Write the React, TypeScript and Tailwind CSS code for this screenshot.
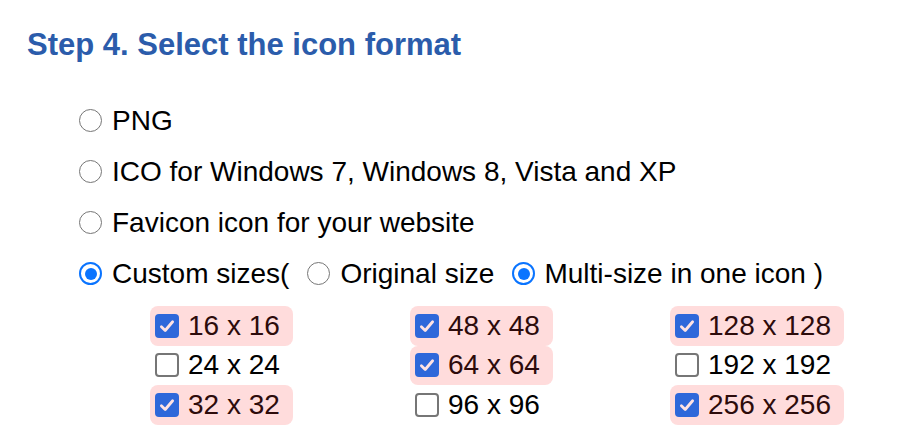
import React from 'react';

const Radio: React.FC<{ checked?: boolean }> = ({ checked }) =>
  checked ? (
    <span className="flex h-[23px] w-[23px] shrink-0 items-center justify-center rounded-full border-[2.5px] border-[#0a74ff] bg-white">
      <span className="h-[12px] w-[12px] rounded-full bg-[#0a74ff]" />
    </span>
  ) : (
    <span className="block h-[23px] w-[23px] shrink-0 rounded-full border-[1.5px] border-[#767676] bg-white" />
  );

const Check: React.FC<{ checked?: boolean }> = ({ checked }) =>
  checked ? (
    <span className="flex h-[24px] w-[24px] shrink-0 items-center justify-center rounded-[4px] bg-[#2e68da]">
      <svg width="18" height="18" viewBox="0 0 16 16" fill="none">
        <path d="M3 8.6 L6.4 12 L13 4.2" stroke="#ffe3e3" strokeWidth="2.5" strokeLinecap="round" strokeLinejoin="round" />
      </svg>
    </span>
  ) : (
    <span className="block h-[24px] w-[24px] shrink-0 rounded-[4px] border-2 border-[#767676] bg-white" />
  );

const sizes = [
  ['16 x 16', true],
  ['48 x 48', true],
  ['128 x 128', true],
  ['24 x 24', false],
  ['64 x 64', true],
  ['192 x 192', false],
  ['32 x 32', true],
  ['96 x 96', false],
  ['256 x 256', true],
] as const;

export default function App() {
  return (
    <div className="min-h-[448px] w-[900px] bg-white text-black" style={{ fontFamily: '"Liberation Sans", Arial, sans-serif' }}>
      <h2 className="pl-[27px] pt-[27px] text-[31px] font-bold leading-[36px] text-[#2b5cab]">
        Step 4. Select the icon format
      </h2>

      <div className="mt-[32px] pl-[79px] text-[28px]">
        <div className="flex h-[51px] items-center gap-[10px]">
          <Radio />
          <span>PNG</span>
        </div>
        <div className="flex h-[51px] items-center gap-[10px]">
          <Radio />
          <span>ICO for Windows 7, Windows 8, Vista and XP</span>
        </div>
        <div className="flex h-[51px] items-center gap-[10px]">
          <Radio />
          <span>Favicon icon for your website</span>
        </div>
        <div className="flex h-[51px] items-center">
          <Radio checked />
          <span className="ml-[10px]">Custom sizes(</span>
          <span className="ml-[18px] flex"><Radio /></span>
          <span className="ml-[10px]">Original size</span>
          <span className="ml-[18px] flex"><Radio checked /></span>
          <span className="ml-[9px]">Multi-size in one icon )</span>
        </div>
      </div>

      <div className="mt-[7px] grid grid-cols-[260px_260px_260px] pl-[150px] text-[28px]">
        {sizes.map(([label, on]) => (
          <div key={label} className="flex h-[39.5px] items-center">
            <span
              className={
                'flex h-full items-center gap-[9px] rounded-[8px] pl-[5px] pr-[13px] ' +
                (on ? 'bg-[#ffdcdc] text-[#2d0b0b]' : 'text-black')
              }
            >
              <Check checked={on} />
              <span>{label}</span>
            </span>
          </div>
        ))}
      </div>
    </div>
  );
}
